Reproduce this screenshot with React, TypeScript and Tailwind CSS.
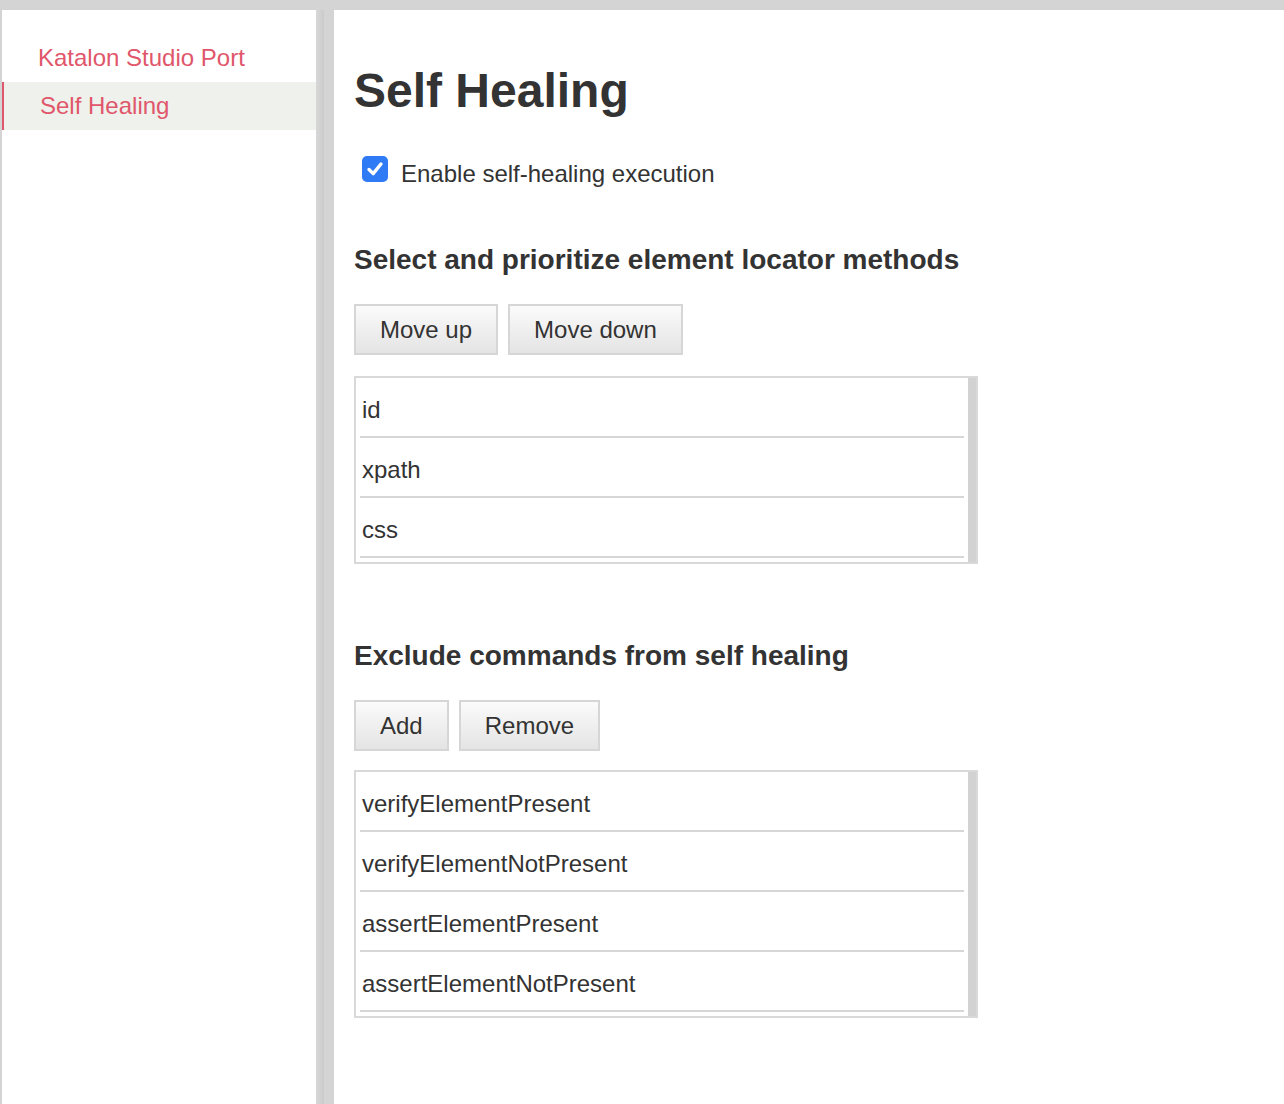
import React from "react";

const font = { fontFamily: '"Liberation Sans", Arial, Helvetica, sans-serif' };

function Btn({ children }: { children: React.ReactNode }) {
  return (
    <button className="h-[51px] px-[24px] border-2 border-[#d6d6d6] bg-gradient-to-b from-[#fbfbfb] to-[#e4e4e4] text-[24px] leading-[28px] text-[#333]">
      {children}
    </button>
  );
}

function ListBox({ items, top }: { items: string[]; top: string }) {
  return (
    <div className={`${top} w-[624px] border-2 border-[#d9d9d9] flex`}>
      <div className="flex-1 pl-[4px] pr-[4px] pb-[4px]">
        {items.map((t) => (
          <div
            key={t}
            className="pt-[18px] pb-[12px] text-[24px] leading-[28px] text-[#333] border-b-2 border-[#d6d6d6] pl-[2px]"
          >
            {t}
          </div>
        ))}
      </div>
      <div className="w-[8px] bg-[#d2d2d2]" />
    </div>
  );
}

export default function App() {
  return (
    <div className="h-[1104px] bg-[#d4d4d4] pt-[10px] pl-[2px] flex overflow-hidden" style={font}>
      <aside className="w-[314px] bg-white pt-[24px]">
        <div className="h-[48px] pl-[36px] text-[24px] leading-[48px] text-[#e0566b]">Katalon Studio Port</div>
        <div className="h-[48px] pl-[36px] text-[24px] leading-[48px] text-[#e0566b] bg-[#eff1ec] border-l-2 border-[#e0566b]">
          Self Healing
        </div>
      </aside>
      <div className="w-[8px] bg-gradient-to-r from-[#d8d8d8] to-[#cbcbcb]" />
      <div className="w-[10px]" />
      <main className="flex-1 bg-white pl-[20px]">
        <h1 className="mt-[53px] text-[48px] leading-[56px] font-bold text-[#333]">Self Healing</h1>
        <div className="mt-[37px] flex items-start">
          <div className="ml-[8px] w-[26px] h-[26px] rounded-[5px] bg-[#2f7bf5] flex items-center justify-center">
            <svg width="20" height="20" viewBox="0 0 20 20">
              <path d="M4 10.5 L8.2 14.6 L16 5" fill="none" stroke="white" strokeWidth="3.4" strokeLinecap="round" strokeLinejoin="round" />
            </svg>
          </div>
          <span className="ml-[13px] mt-[4px] text-[24px] leading-[28px] text-[#333]">Enable self-healing execution</span>
        </div>
        <h2 className="mt-[56px] text-[28px] leading-[32px] font-bold text-[#333]">
          Select and prioritize element locator methods
        </h2>
        <div className="mt-[28px] flex gap-[10px]">
          <Btn>Move up</Btn>
          <Btn>Move down</Btn>
        </div>
        <ListBox top="mt-[21px]" items={["id", "xpath", "css"]} />
        <h2 className="mt-[76px] text-[28px] leading-[32px] font-bold text-[#333]">
          Exclude commands from self healing
        </h2>
        <div className="mt-[28px] flex gap-[10px]">
          <Btn>Add</Btn>
          <Btn>Remove</Btn>
        </div>
        <ListBox
          top="mt-[19px]"
          items={[
            "verifyElementPresent",
            "verifyElementNotPresent",
            "assertElementPresent",
            "assertElementNotPresent",
          ]}
        />
      </main>
    </div>
  );
}
